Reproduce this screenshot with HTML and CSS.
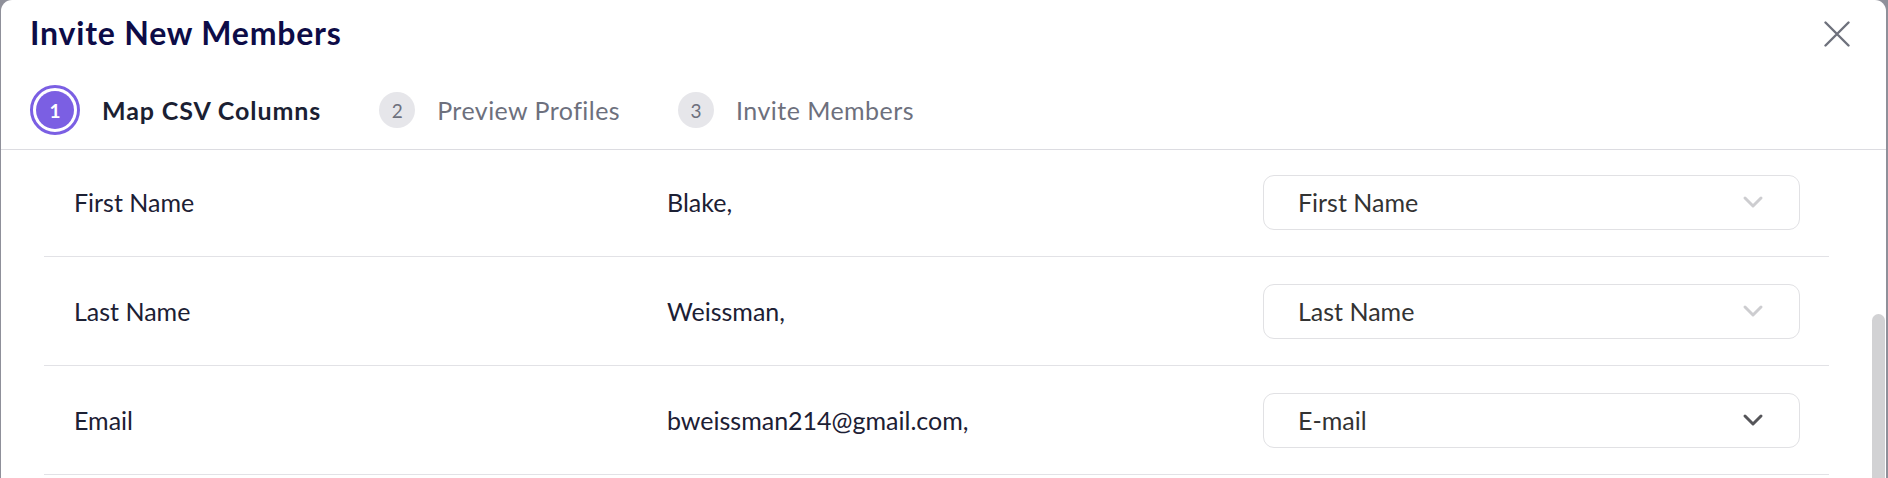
FILE: index.html
```html
<!DOCTYPE html>
<html lang="en">
<head>
<meta charset="utf-8">
<title>Invite New Members</title>
<link rel="stylesheet" href="styles.css">
</head>
<body>
<div class="modal">
  <header class="modal-header">
    <div class="title-row">
      <h1 class="title">Invite New Members</h1>
      <button class="close" aria-label="Close">
        <svg viewBox="0 0 26 26" width="26" height="26"><path d="M1.5 1.5 L24.5 24.5 M24.5 1.5 L1.5 24.5" stroke="#6e717c" stroke-width="2.4" stroke-linecap="round" fill="none"/></svg>
      </button>
    </div>
    <ol class="steps">
      <li class="step active"><span class="num"><span class="inner">1</span></span><span class="label">Map CSV Columns</span></li>
      <li class="step"><span class="num">2</span><span class="label">Preview Profiles</span></li>
      <li class="step"><span class="num">3</span><span class="label">Invite Members</span></li>
    </ol>
  </header>
  <div class="modal-body">
    <div class="rows">
      <div class="row">
        <div class="field">First Name</div>
        <div class="value">Blake,</div>
        <div class="select"><span>First Name</span>
          <svg class="chev light" viewBox="0 0 22 14" width="22" height="14"><path d="M3 3 L11 11 L19 3" fill="none" stroke-width="3" stroke-linecap="round" stroke-linejoin="round"/></svg>
        </div>
      </div>
      <div class="row">
        <div class="field">Last Name</div>
        <div class="value">Weissman,</div>
        <div class="select"><span>Last Name</span>
          <svg class="chev light" viewBox="0 0 22 14" width="22" height="14"><path d="M3 3 L11 11 L19 3" fill="none" stroke-width="3" stroke-linecap="round" stroke-linejoin="round"/></svg>
        </div>
      </div>
      <div class="row">
        <div class="field">Email</div>
        <div class="value">bweissman214@gmail.com,</div>
        <div class="select"><span>E-mail</span>
          <svg class="chev dark" viewBox="0 0 22 14" width="22" height="14"><path d="M3 3 L11 11 L19 3" fill="none" stroke-width="3" stroke-linecap="round" stroke-linejoin="round"/></svg>
        </div>
      </div>
    </div>
    <div class="scroll-thumb"></div>
  </div>
</div>
</body>
</html>
```

FILE: styles.css
```css
html, body {
  margin: 0;
  padding: 0;
}
body {
  width: 1888px;
  height: 478px;
  overflow: hidden;
  background: #8f909a;
  font-family: "Lato", "Liberation Sans", sans-serif;
  padding: 0 2px 0 1px;
  box-sizing: border-box;
}
.modal {
  background: #ffffff;
  height: 478px;
  border-radius: 11px 11px 0 0;
  overflow: hidden;
  display: flex;
  flex-direction: column;
}
.modal-header {
  border-bottom: 1px solid #dcdce1;
  padding: 14px 0 14px 29px;
}
.title-row {
  display: flex;
  align-items: flex-start;
  justify-content: space-between;
}
.title {
  margin: 0;
  font-size: 32px;
  line-height: 38px;
  font-weight: 700;
  color: #0d0c47;
  letter-spacing: 0.8px;
}
.close {
  background: none;
  border: 0;
  padding: 0;
  margin: 7px 36px 0 0;
  width: 26px;
  height: 26px;
  display: block;
}
.close svg { display: block; }
.steps {
  list-style: none;
  margin: 33px 0 0 0;
  padding: 0;
  display: flex;
  align-items: center;
  gap: 58px;
  height: 50px;
}
.step {
  display: flex;
  align-items: center;
  gap: 22px;
}
.step .num {
  width: 36px;
  height: 36px;
  border-radius: 50%;
  background: #e6e6ea;
  color: #6d707d;
  font-size: 19px;
  display: flex;
  align-items: center;
  justify-content: center;
}
.step .label {
  font-size: 25px;
  color: #6d707d;
  letter-spacing: 0.45px;
}
.step.active .num {
  width: 50px;
  height: 50px;
  box-sizing: border-box;
  background: #ffffff;
  border: 3px solid #7b5fe3;
}
.step.active .inner {
  width: 38px;
  height: 38px;
  border-radius: 50%;
  background: #7b5fe3;
  color: #ffffff;
  font-weight: 700;
  font-size: 19px;
  display: flex;
  align-items: center;
  justify-content: center;
}
.step.active .label {
  font-weight: 700;
  color: #1b1f33;
  letter-spacing: 0.9px;
}
.modal-body {
  position: relative;
  flex: 1;
  overflow: hidden;
}
.rows {
  margin: -2px 57px 0 43px;
}
.row {
  display: grid;
  grid-template-columns: 593px 1fr 537px;
  align-items: center;
  height: 108px;
  padding: 0 29px 0 30px;
  border-bottom: 1px solid #e2e2e6;
  font-size: 25px;
  color: #1c2034;
}
.select {
  height: 55px;
  box-sizing: border-box;
  border: 1px solid #e1e1e4;
  border-radius: 11px;
  display: flex;
  align-items: center;
  justify-content: space-between;
  padding: 0 35px 0 34px;
  color: #333333;
}
.chev { display: block; }
.chev.light path { stroke: #cdcdd0; }
.chev.dark path { stroke: #555559; }
.scroll-thumb {
  position: absolute;
  right: 1px;
  top: 164px;
  width: 13px;
  height: 200px;
  border-radius: 7px;
  background: #d2d2d4;
}
```
